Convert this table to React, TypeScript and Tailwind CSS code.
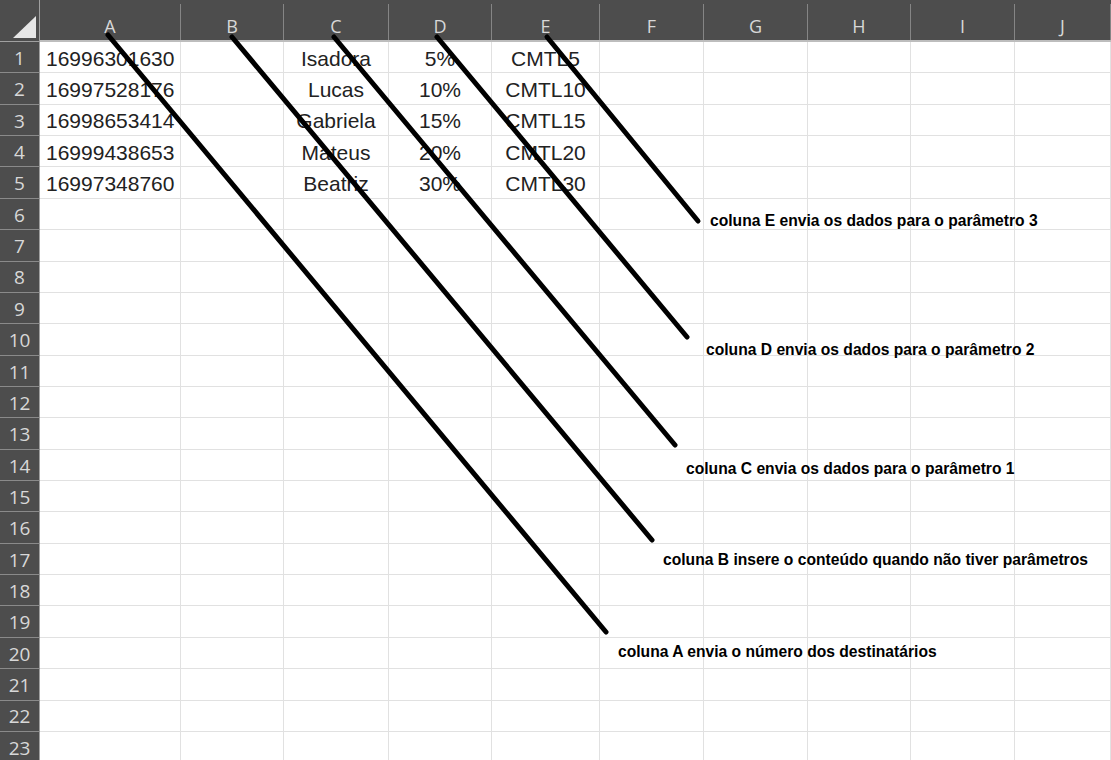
import React from 'react';

const columns = [
  { label: 'A', width: 'w-[141px]' },
  { label: 'B', width: 'w-[103px]' },
  { label: 'C', width: 'w-[105px]' },
  { label: 'D', width: 'w-[103px]' },
  { label: 'E', width: 'w-[108px]' },
  { label: 'F', width: 'w-[104px]' },
  { label: 'G', width: 'w-[104px]' },
  { label: 'H', width: 'w-[103px]' },
  { label: 'I', width: 'w-[104px]' },
  { label: 'J', width: 'w-[96px]' },
];

const data: string[][] = [
  ['16996301630', '', 'Isadora', '5%', 'CMTL5'],
  ['16997528176', '', 'Lucas', '10%', 'CMTL10'],
  ['16998653414', '', 'Gabriela', '15%', 'CMTL15'],
  ['16999438653', '', 'Mateus', '20%', 'CMTL20'],
  ['16997348760', '', 'Beatriz', '30%', 'CMTL30'],
];

const rows = Array.from({ length: 23 }, (_, i) => i + 1);

// hand-drawn arrows from each column header to its note
const strokes = [
  { x1: 108, y1: 35, x2: 606, y2: 632 },
  { x1: 232, y1: 37, x2: 652, y2: 540 },
  { x1: 334, y1: 37, x2: 675, y2: 445 },
  { x1: 437, y1: 37, x2: 687, y2: 337 },
  { x1: 547, y1: 37, x2: 698, y2: 221 },
];

const notes = [
  { text: 'coluna E envia os dados para o parâmetro 3', className: 'left-[710px] top-[210px]' },
  { text: 'coluna D envia os dados para o parâmetro 2', className: 'left-[706px] top-[339px]' },
  { text: 'coluna C envia os dados para o parâmetro 1', className: 'left-[686px] top-[458px]' },
  { text: 'coluna B insere o conteúdo quando não tiver parâmetros', className: 'left-[663px] top-[549px]' },
  { text: 'coluna A envia o número dos destinatários', className: 'left-[618px] top-[641px]' },
];

export default function App() {
  return (
    <div className="relative h-[760px] w-[1111px] overflow-hidden bg-white font-['Liberation_Sans',Arial,sans-serif]">
      <div className="flex h-[42px] bg-[#4d4d4d]">
        <div className="flex w-[40px] shrink-0 items-end justify-end border-r border-b border-[#a0a0a0] pb-[3px] pr-[3px]">
          <svg width="23" height="22" viewBox="0 0 23 22">
            <polygon points="0,22 23,0 23,22" fill="#e6e6e6" />
          </svg>
        </div>
        {columns.map((col) => (
          <div key={col.label} className={`${col.width} flex shrink-0 flex-col border-b-2 border-[#bdbdbd]`}>
            <div className="h-[11px]" />
            <div className="flex flex-1 items-center justify-center border-r border-[#858585] pt-[9px] font-['Open_Sans',sans-serif] text-[18px] text-[#d8d8d8]">
              {col.label}
            </div>
          </div>
        ))}
      </div>

      {rows.map((row) => {
        const values = data[row - 1] ?? [];
        return (
          <div key={row} className="flex h-[31.36px]">
            <div className="flex w-[40px] shrink-0 items-center justify-center border-r border-b border-r-[#a0a0a0] border-b-[#8a8a8a] bg-[#4d4d4d] pt-[2px] font-['Open_Sans',sans-serif] text-[19px] text-[#d8d8d8]">
              {row}
            </div>
            {columns.map((col, ci) => (
              <div
                key={col.label}
                className={`${col.width} flex shrink-0 items-center border-r border-b border-[#e1e1e1] pt-[2px] text-[21px] leading-none text-[#222] ${
                  ci === 0 ? 'justify-start pl-[6px]' : 'justify-center'
                }`}
              >
                {values[ci] ?? ''}
              </div>
            ))}
          </div>
        );
      })}

      <svg className="pointer-events-none absolute inset-0" width="1111" height="760">
        {strokes.map((s, i) => (
          <line key={i} {...s} stroke="#000" strokeWidth="5" strokeLinecap="round" />
        ))}
      </svg>

      {notes.map((note) => (
        <span
          key={note.text}
          className={`absolute ${note.className} origin-left scale-x-[0.92] whitespace-nowrap text-[17px] font-bold leading-[22px] text-black`}
        >
          {note.text}
        </span>
      ))}
    </div>
  );
}
